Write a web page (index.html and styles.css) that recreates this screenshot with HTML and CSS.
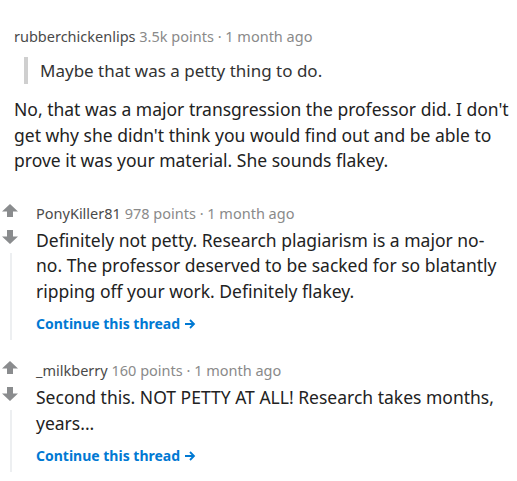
FILE: index.html
```html
<!DOCTYPE html>
<html>
<head>
<meta charset="utf-8">
<link rel="stylesheet" href="styles.css">
</head>
<body>
<div class="page">
  <div class="top-comment">
    <div class="meta"><span class="author">rubberchickenlips</span> <span class="points">3.5k points · 1 month ago</span></div>
    <blockquote class="quote">Maybe that was a petty thing to do.</blockquote>
    <p class="text first">No, that was a major transgression the professor did. I don't get why she didn't think you would find out and be able to prove it was your material. She sounds flakey.</p>
  </div>

  <div class="comment c2">
    <div class="votes">
      <svg class="arrow" viewBox="0 0 16 14" width="16" height="14"><path d="M8 0 L16 7.5 L11 7.5 L11 13 L5 13 L5 7.5 L0 7.5 Z" fill="#8a8c8e"/></svg>
      <svg class="arrow down" viewBox="0 0 16 14" width="16" height="14"><path d="M5 0 H11 V6.5 H16 L8 14 L0 6.5 H5 Z" fill="#8a8c8e"/></svg>
      <div class="thread-line"></div>
    </div>
    <div class="content">
      <div class="meta"><span class="author">PonyKiller81</span> <span class="points">978 points · 1 month ago</span></div>
      <p class="text">Definitely not petty. Research plagiarism is a major no-no. The professor deserved to be sacked for so blatantly ripping off your work. Definitely flakey.</p>
      <a class="continue">Continue this thread<svg class="go" viewBox="0 0 12 12" width="12" height="12"><path d="M1 6 H10 M6 2 L10 6 L6 10" fill="none" stroke="#0079d3" stroke-width="1.8"/></svg></a>
    </div>
  </div>

  <div class="comment c3">
    <div class="votes">
      <svg class="arrow" viewBox="0 0 16 14" width="16" height="14"><path d="M8 0 L16 7.5 L11 7.5 L11 13 L5 13 L5 7.5 L0 7.5 Z" fill="#8a8c8e"/></svg>
      <svg class="arrow down" viewBox="0 0 16 14" width="16" height="14"><path d="M5 0 H11 V6.5 H16 L8 14 L0 6.5 H5 Z" fill="#8a8c8e"/></svg>
      <div class="thread-line"></div>
    </div>
    <div class="content">
      <div class="meta"><span class="author">_milkberry</span> <span class="points">160 points · 1 month ago</span></div>
      <p class="text">Second this. NOT PETTY AT ALL! Research takes months, years...</p>
      <a class="continue">Continue this thread<svg class="go" viewBox="0 0 12 12" width="12" height="12"><path d="M1 6 H10 M6 2 L10 6 L6 10" fill="none" stroke="#0079d3" stroke-width="1.8"/></svg></a>
    </div>
  </div>
</div>
</body>
</html>
```

FILE: styles.css
```css
html, body {
  margin: 0;
  padding: 0;
  background: #ffffff;
}

.page {
  padding: 26px 8px 0 14px;
  font-family: "Noto Sans", "Open Sans", sans-serif;
  color: #222222;
}

.meta {
  font-size: 14.5px;
  line-height: 20px;
  height: 20px;
  white-space: nowrap;
}

.author {
  color: #4a4a4a;
}

.points {
  color: #8a8a8a;
}

.quote {
  margin: 11px 0 0 10px;
  padding: 0 0 0 12px;
  border-left: 4px solid #cfcfcf;
  font-size: 17px;
  line-height: 27px;
  color: #333333;
}

.text {
  margin: 5px 0 0 0;
  font-size: 17.5px;
  line-height: 25.5px;
  color: #222222;
}

.text.first {
  margin-top: 13px;
}

.comment {
  display: flex;
  margin-left: -12px;
}

.c2 {
  margin-top: 29px;
}

.c3 {
  margin-top: 20px;
}

.votes {
  width: 16px;
  flex: none;
  display: flex;
  flex-direction: column;
  align-items: flex-start;
  padding-top: 1px;
}

.arrow {
  display: block;
}

.arrow.down {
  margin-top: 12px;
}

.thread-line {
  flex: 1;
  width: 2px;
  background: #edeff1;
  margin: 9px 0 0 8px;
}

.content {
  margin-left: 18px;
  flex: 1;
  min-width: 0;
  padding-bottom: 6px;
}

.continue {
  display: flex;
  align-items: center;
  margin-top: 10px;
  font-size: 14px;
  line-height: 20px;
  font-weight: 700;
  color: #0079d3;
  cursor: pointer;
}

.go {
  margin-left: 4px;
}
```
